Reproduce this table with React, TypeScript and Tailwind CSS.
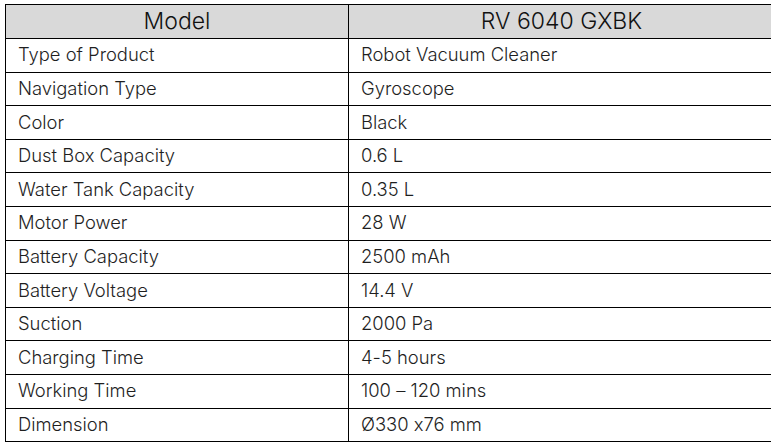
const rows: [string, string][] = [
  ["Type of Product", "Robot Vacuum Cleaner"],
  ["Navigation Type", "Gyroscope"],
  ["Color", "Black"],
  ["Dust Box Capacity", "0.6 L"],
  ["Water Tank Capacity", "0.35 L"],
  ["Motor Power", "28 W"],
  ["Battery Capacity", "2500 mAh"],
  ["Battery Voltage", "14.4 V"],
  ["Suction", "2000 Pa"],
  ["Charging Time", "4-5 hours"],
  ["Working Time", "100 – 120 mins"],
  ["Dimension", "Ø330 x76 mm"],
];

export default function App() {
  return (
    <div className="h-[442px] w-[771px] overflow-hidden bg-white pl-[5px] pt-[4px] font-['Inter',sans-serif] text-[#1f1f1f] [font-feature-settings:'calt'_0]">
      <div className="w-[772px] border-l border-t border-black">
        <div className="flex h-[34px] border-b border-black bg-[#d9d9d9] text-[23px] font-light text-[#111]">
          <div className="flex w-[343px] items-center justify-center border-r border-black">Model</div>
          <div className="flex flex-1 items-center justify-center pr-[3px]">RV 6040 GXBK</div>
        </div>
        {rows.map(([label, value]) => (
          <div key={label} className="flex h-[33.6px] border-b border-black text-[18.4px] font-light">
            <div className="flex w-[343px] items-center border-r border-black pl-[12px]">{label}</div>
            <div className="flex flex-1 items-center pl-[12px]">{value}</div>
          </div>
        ))}
      </div>
    </div>
  );
}
